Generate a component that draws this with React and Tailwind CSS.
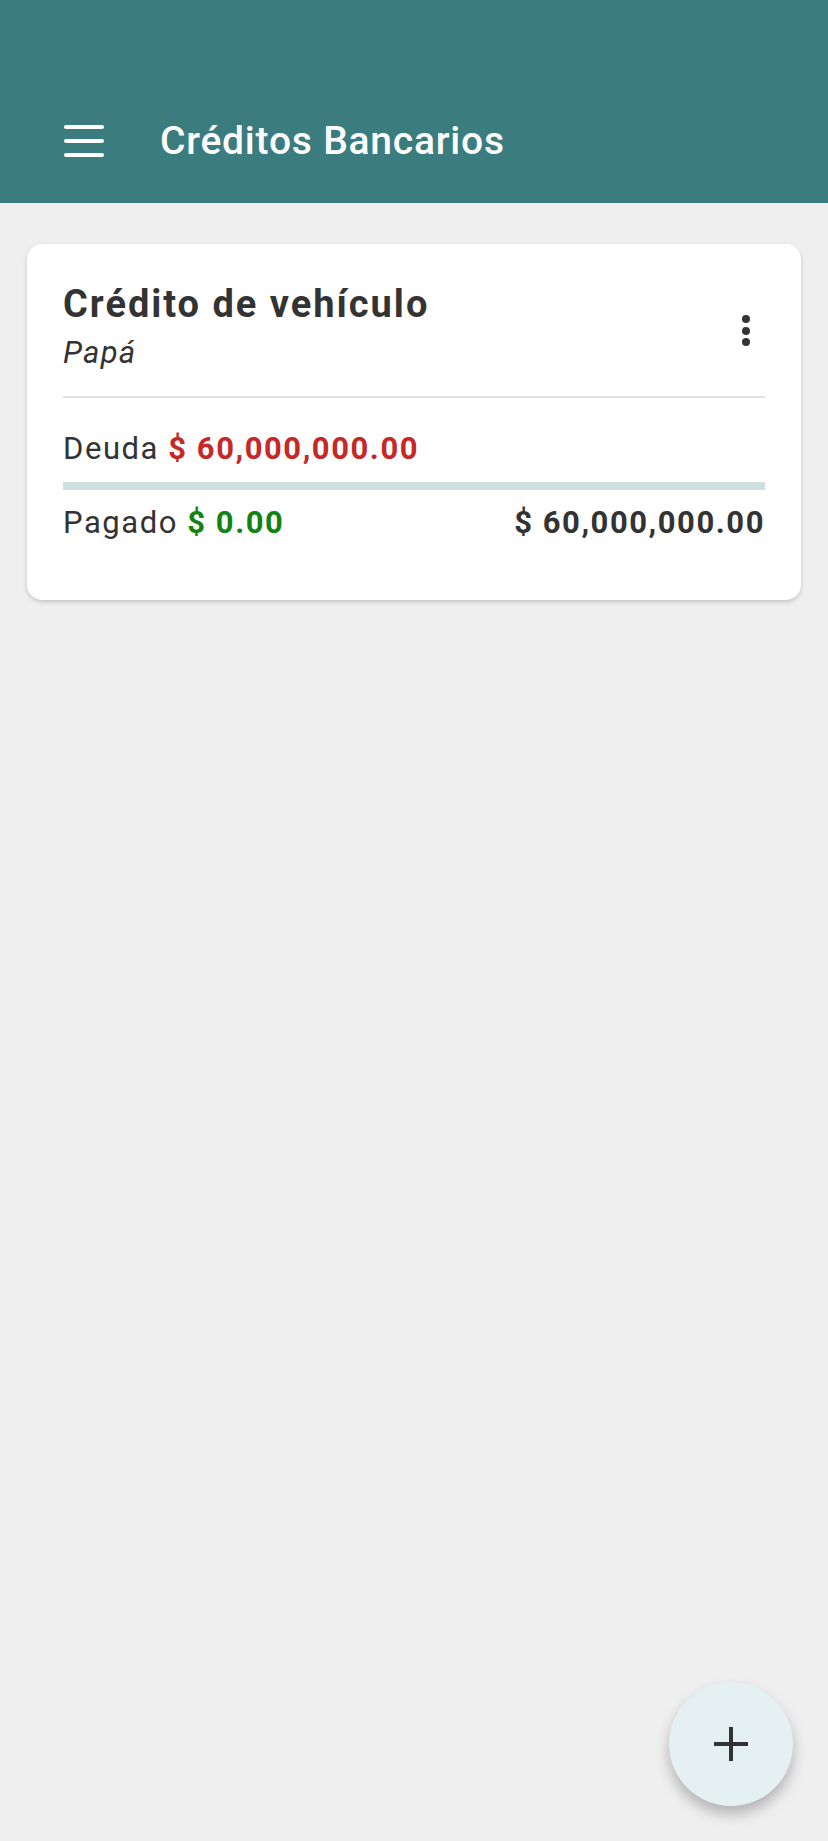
import React from "react";

export default function App() {
  return (
    <div
      className="relative w-full min-h-[1841px] bg-[#efefef] text-[#333333]"
      style={{ fontFamily: "Roboto, 'Noto Sans', sans-serif" }}
    >
      <header className="bg-[#3b7c7f] pt-[79px]">
        <div className="flex h-[124px] items-center">
          <div className="ml-[64px] flex w-[40px] flex-col gap-[10px]">
            <span className="block h-[4px] w-full rounded-full bg-white" />
            <span className="block h-[4px] w-full rounded-full bg-white" />
            <span className="block h-[4px] w-full rounded-full bg-white" />
          </div>
          <h1 className="ml-[56px] text-[39px] font-medium leading-[46px] tracking-[0.02em] text-white">
            Créditos Bancarios
          </h1>
        </div>
      </header>

      <main className="px-[27px] pt-[41px]">
        <div className="rounded-[15px] bg-white px-[36px] pt-[39px] pb-[59px] shadow-[0_2px_4px_rgba(0,0,0,0.18)]">
          <div className="flex items-start justify-between">
            <div>
              <h2 className="text-[38px] font-bold leading-[42px] tracking-[0.052em] text-[#333333]">
                Crédito de vehículo
              </h2>
              <p className="mt-[10px] text-[31px] italic leading-[36px] tracking-[0.04em] text-[#333333]">
                Papá
              </p>
            </div>
            <div className="mt-[32px] mr-[15px] flex flex-col items-center gap-[3.5px]">
              <span className="block h-[8px] w-[8px] rounded-full bg-[#333333]" />
              <span className="block h-[8px] w-[8px] rounded-full bg-[#333333]" />
              <span className="block h-[8px] w-[8px] rounded-full bg-[#333333]" />
            </div>
          </div>

          <div className="mt-[25px] h-[2px] bg-[#e2e2e2]" />

          <p className="mt-[33px] text-[31px] leading-[36px] tracking-[0.05em]">
            Deuda <span className="font-bold text-[#c62828]">$ 60,000,000.00</span>
          </p>

          <div className="mt-[15px] h-[8px] bg-[#d0e0e0]" />

          <div className="mt-[15px] flex items-center justify-between text-[31px] leading-[36px] tracking-[0.05em]">
            <p>
              Pagado <span className="font-bold text-[#128312]">$ 0.00</span>
            </p>
            <p className="font-bold text-[#333333]">$ 60,000,000.00</p>
          </div>
        </div>
      </main>

      <button className="absolute left-[669px] top-[1682px] flex h-[124px] w-[124px] items-center justify-center rounded-full bg-[#e4f0f1] shadow-[0_8px_14px_rgba(0,0,0,0.25)]">
        <svg width="34" height="34" viewBox="0 0 34 34">
          <rect x="15" y="0" width="4" height="34" fill="#333333" />
          <rect x="0" y="15" width="34" height="4" fill="#333333" />
        </svg>
      </button>
    </div>
  );
}
